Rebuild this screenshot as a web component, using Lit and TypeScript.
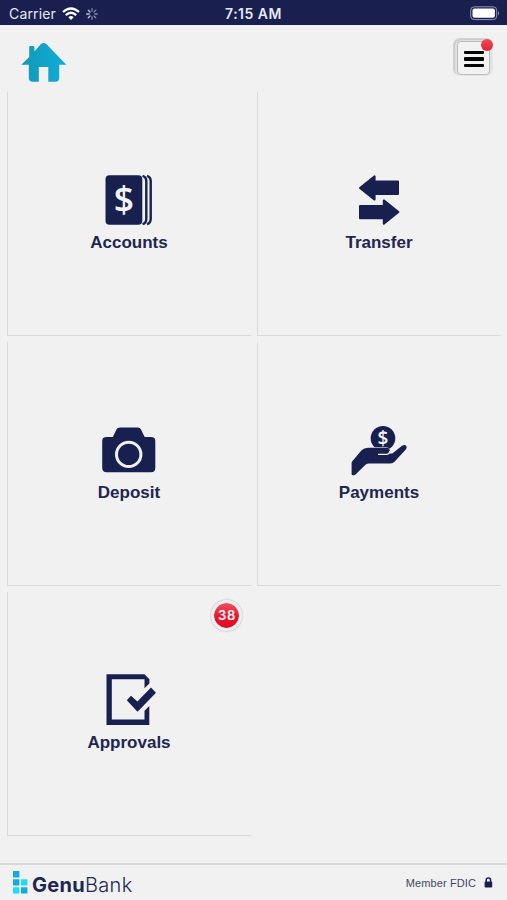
import { LitElement, html, css, svg } from "lit";
import { customElement, property } from "lit/decorators.js";

const icons: Record<string, unknown> = {
  accounts: svg`
    <rect x="5.5" y="5.3" width="36.8" height="49.5" rx="4"/>
    <path d="M42.6 5.8 Q46.3 7 46.3 11 V49 Q46.3 53 42.6 54.2 M47 5.8 Q50.7 7 50.7 11 V49 Q50.7 53 47 54.2" fill="none" stroke="#182050" stroke-width="2.4"/>
    <text class="dollar" x="24" y="42.3" font-size="35.5" text-anchor="middle">$</text>`,
  transfer: svg`
    <path stroke="#182050" stroke-width="2" stroke-linejoin="round" d="M10 18 L24.6 6.3 V11.5 H48 V24 H24.6 V29.6 Z M48.4 42 L33.8 53.8 V48.2 H10 V36 H33.8 V30.4 Z"/>`,
  deposit: svg`
    <path stroke="#182050" stroke-width="2" stroke-linejoin="round" d="M6 9 H13.5 L17.5 0.8 Q18 -0.5 20 -0.5 H37.5 Q39.5 -0.5 40 0.8 L44 9 H51 Q54.3 9 54.3 12.2 V38.8 Q54.3 42.3 51 42.3 H6.5 Q3.2 42.3 3.2 38.8 V12.2 Q3.2 9 6.5 9 Z" transform="translate(0 9)"/>
    <circle cx="28.7" cy="34.4" r="12.2" fill="none" stroke="#f1f1f1" stroke-width="3"/>`,
  payments: svg`
    <circle cx="33" cy="18.2" r="12.3"/>
    <path stroke="#f1f1f1" stroke-width="1" paint-order="stroke" d="M1.6 54.2 V43 Q1.6 42 2.5 41 L11.6 30.2 Q14 27.8 18 27.7 H36.5 Q39.8 27.8 39.8 31 Q39.8 32.6 38.5 33.5 H42.3 L52 25.8 Q54.5 24.2 56 25.5 Q57.5 27 56 29.2 L44.5 41.8 Q43 43.4 40.5 43.4 H19 Q17 43.4 15.5 44.8 L6 54 Q5 55.2 3.4 55.2 Q1.6 55.2 1.6 54.2 Z"/>
    <path d="M28 34.4 H37 Q39.5 34 39.8 31" fill="none" stroke="#f1f1f1" stroke-width="1.3"/>
    <text class="dollar" x="33" y="24.8" font-size="19" text-anchor="middle">$</text>`,
  approvals: svg`
    <path d="M6.5 4.2 H44.5 L49.4 9.2 V13.4 L44.5 18.2 V9.2 H11.8 V49.6 H44.5 V40.8 L49.3 36 V55 H6.5 Z"/>
    <path d="M26.8 30.3 L31 25.8 L37.4 31.6 L51 17.6 L56 22.8 L37.5 41.8 Z"/>`,
};

@customElement("menu-tile")
class MenuTile extends LitElement {
  static styles = css`
    :host {
      display: flex; flex-direction: column; align-items: center;
      box-sizing: border-box; height: 244px; padding-top: 78px;
      border-left: 1.5px solid #dadada; border-bottom: 1.5px solid #dadada;
      position: relative;
    }
    .icon { display: block; width: 60px; height: 60px; fill: #182050; overflow: visible; }
    .dollar { font-family: "Open Sans", sans-serif; font-weight: 600; fill: #f4f4f4; }
    .label { margin: 3px 1px 0 0; line-height: 20px; font-size: 17px; font-weight: 700; color: #20264f; white-space: nowrap; }
    .badge {
      position: absolute; right: 9px; top: 8px; box-sizing: border-box; width: 31px; height: 31px;
      border-radius: 50%; border: 3px solid #eeeeee; box-shadow: 0 0 2px #999;
      background: linear-gradient(#f05060, #e8152b 55%, #dc1026) padding-box; color: #fff;
      font-family: Inter, sans-serif; font-size: 13px; font-weight: 600; line-height: 25px; text-align: center; letter-spacing: .6px; text-indent: 1px;
    }
  `;
  @property() name = "";
  @property() label = "";
  @property() count = "";
  render() {
    return html`
      <svg class="icon" viewBox="0 0 60 60">${icons[this.name]}</svg>
      <div class="label">${this.label}</div>
      ${this.count ? html`<span class="badge">${this.count}</span>` : ""}
    `;
  }
}

@customElement("app-root")
class AppRoot extends LitElement {
  static styles = css`
    :host {
      display: flex; flex-direction: column; height: 900px; width: 507px; overflow: hidden;
      background: #f1f1f1; font-family: "Liberation Sans", Arial, sans-serif;
    }
    .status {
      height: 25px; box-sizing: border-box; flex: none; display: grid; grid-template-columns: 1fr auto 1fr; align-items: center;
      background: #19204f; color: #e6e8f4; padding: 2px 7px 0 9px; font-family: Inter, sans-serif; font-size: 14px;
    }
    .left { display: flex; align-items: center; gap: 6px; letter-spacing: .15px; }
    .time { font-weight: 600; font-size: 14px; letter-spacing: .5px; margin-right: 2px; }
    .battery { justify-self: end; display: block; }
    svg { display: block; }
    .header { height: 67px; flex: none; box-sizing: border-box; display: flex; justify-content: space-between; padding: 13px 14px 0 21px; }
    .home { margin-top: 3px; }
    .menu {
      position: relative; box-sizing: border-box; width: 40px; height: 38px; border-radius: 7px;
      background: #e2e2e2; border: 1px solid #d2d2d2; border-right-color: #e6e6e6; border-bottom-color: #e6e6e6; padding: 2px 3px 1px 3px;
      box-shadow: inset 1px 1px 1px #c8c8c8;
    }
    .face {
      box-sizing: border-box; height: 34px; width: 33px; border: 1px solid #bcbcbc; border-radius: 4px; background: #f2f2f2;
      display: flex; flex-direction: column; align-items: center; justify-content: center; gap: 3px; padding-top: 2px;
    }
    .bar { width: 20px; height: 3.5px; border-radius: 1px; background: #050505; }
    .dot { position: absolute; right: -1px; top: 0; width: 12px; height: 12px; border-radius: 50%; background: linear-gradient(#f04a55, #e02437); }
    .tiles { display: grid; grid-template-columns: 244px 244px; gap: 6px; padding-left: 7px; flex: 1; align-content: start; }
    .footer {
      height: 37px; box-sizing: border-box; flex: none; display: flex; align-items: center; justify-content: space-between;
      border-top: 2px solid #d8d8d8; padding: 0 14px 0 13px; color: #20264f;
    }
    .brand { display: flex; align-items: center; gap: 4px; font-family: Inter, sans-serif; font-size: 20px; }
    .name { letter-spacing: .3px; padding-top: 4px; }
    .brand b { font-weight: 700; }
    .thin { font-weight: 300; }
    .fdic { display: flex; align-items: center; gap: 8px; font-size: 11px; letter-spacing: .1px; color: #414668; }
  `;
  render() {
    return html`
      <div class="status">
        <div class="left">
          <span>Carrier</span>
          <svg width="18" height="14" viewBox="0 0 18 14" fill="none" stroke="#fff" stroke-width="2.3">
            <path d="M1 5 Q9 -2 17 5 M3.8 8.1 Q9 3.5 14.2 8.1"/><path d="M6.3 10.2 Q9 8 11.7 10.2 L9 13 Z" fill="#fff" stroke="none"/>
          </svg>
          <svg width="12" height="12" viewBox="-6 -6 12 12" stroke="#d8daea" stroke-width="1.3" stroke-linecap="round">
            ${[0, 1, 2, 3, 4, 5, 6, 7].map((i) => svg`<path d="M0 -2.8 V-5.3" opacity=${i > 4 ? 0.9 : 0.55} transform="rotate(${i * 45})"/>`)}
          </svg>
        </div>
        <div class="time">7:15 AM</div>
        <svg class="battery" width="30" height="15" viewBox="0 0 30 15">
          <rect x=".7" y=".8" width="26" height="12.8" rx="3.5" fill="none" stroke="#9397b5" stroke-width="1"/>
          <rect x="2.5" y="2.6" width="22.4" height="9.2" rx="2" fill="#fff"/>
          <path d="M28 5 Q30 7.2 28 9.4 Z" fill="#9397b5"/>
        </svg>
      </div>
      <div class="header">
        <svg class="home" width="46" height="42" viewBox="0 0 46 42">
          <defs><linearGradient id="roof" x1="0" y1="0" x2="1" y2="0"><stop offset="0" stop-color="#1299b7"/><stop offset="1" stop-color="#10add8"/></linearGradient></defs>
          <path fill="url(#roof)" d="M.3 23.7 L8.2 16 V6 Q8.2 5 9.3 5 H12.3 Q13.4 5 13.4 6 V10.5 L20 3 Q22.5 .8 25.3 3 L45.3 23.7 H38.2 V37 Q38.2 40.7 34.4 40.7 H27.3 V26 H17.8 V40.7 H11.5 Q7.8 40.7 7.8 37 V23.7 Z"/>
        </svg>
        <div class="menu">
          <div class="face"><div class="bar"></div><div class="bar"></div><div class="bar"></div></div>
          <div class="dot"></div>
        </div>
      </div>
      <div class="tiles">
        <menu-tile name="accounts" label="Accounts"></menu-tile>
        <menu-tile name="transfer" label="Transfer"></menu-tile>
        <menu-tile name="deposit" label="Deposit"></menu-tile>
        <menu-tile name="payments" label="Payments"></menu-tile>
        <menu-tile name="approvals" label="Approvals" count="38"></menu-tile>
      </div>
      <div class="footer">
        <div class="brand">
          <svg width="15" height="23" viewBox="0 0 15 23">
            <path fill="#17a9dd" d="M0 0 H6.4 V6.6 H0 Z M0 8.2 H6.4 V14.6 H0 Z M8 16.2 H14.4 V22.4 H8 Z"/>
            <path fill="#1edcf3" d="M8 8.2 H14.4 V14.6 H8 Z M0 16.2 H6.4 V22.4 H0 Z"/>
          </svg>
          <span class="name"><b>Genu</b><span class="thin">Bank</span></span>
        </div>
        <div class="fdic">
          <span>Member FDIC</span>
          <svg width="9" height="11" viewBox="0 0 9 11"><rect x=".6" y="4.6" width="7.6" height="6" rx="1" fill="#182050"/><path d="M2.2 5 V3 Q2.2 1 4.4 1 Q6.6 1 6.6 3 V5" fill="none" stroke="#182050" stroke-width="1.5"/></svg>
        </div>
      </div>
    `;
  }
}
